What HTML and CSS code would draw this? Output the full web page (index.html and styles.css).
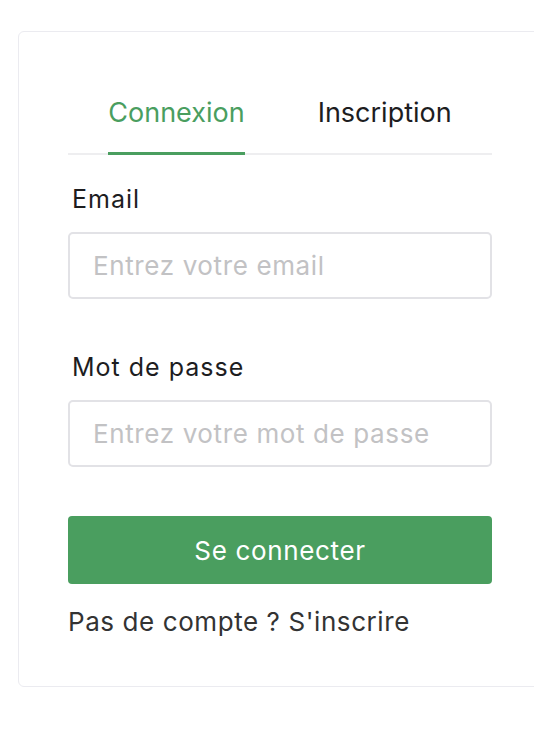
FILE: index.html
```html
<!DOCTYPE html>
<html lang="fr">
<head>
<meta charset="utf-8">
<title>Connexion</title>
<link rel="stylesheet" href="styles.css">
</head>
<body>
<div class="card">
  <div class="tabs">
    <div class="tab active">Connexion</div>
    <div class="tab">Inscription</div>
  </div>
  <form class="form">
    <div class="field">
      <label class="label" for="email">Email</label>
      <input class="input" id="email" type="email" placeholder="Entrez votre email">
    </div>
    <div class="field field-last">
      <label class="label" for="pwd">Mot de passe</label>
      <input class="input" id="pwd" type="password" placeholder="Entrez votre mot de passe">
    </div>
    <button class="btn" type="button">Se connecter</button>
    <p class="switch">Pas de compte ? S'inscrire</p>
  </form>
</div>
</body>
</html>
```

FILE: styles.css
```css
html, body {
  margin: 0;
  padding: 0;
  overflow: hidden;
  background: #ffffff;
}
body {
  font-family: "Inter", "Liberation Sans", sans-serif;
  color: #222;
}
.card {
  margin: 31px 0 0 18px;
  width: 424px;
  padding: 65px 50px 49px 49px;
  border: 1px solid #ebebf0;
  border-radius: 6px;
  background: #fff;
}
.tabs {
  display: flex;
  justify-content: center;
  gap: 73px;
  border-bottom: 2px solid #eeeef0;
}
.tab {
  font-size: 27px;
  line-height: 32px;
  padding-bottom: 23px;
  border-bottom: 3px solid transparent;
  margin-bottom: -2px;
  color: #1d1d1f;
}
.tab.active {
  color: #4a9e5f;
  border-bottom-color: #4a9e5f;
}
.form {
  display: flex;
  flex-direction: column;
  margin: 29px 0 0;
}
.field {
  display: flex;
  flex-direction: column;
  gap: 18px;
  margin-bottom: 53px;
}
.field-last {
  margin-bottom: 49px;
}
.label {
  font-size: 25px;
  line-height: 30px;
  letter-spacing: 1px;
  padding-left: 4px;
  color: #1d1d1f;
}
.input {
  box-sizing: border-box;
  height: 67px;
  width: 100%;
  border: 2px solid #e2e2e6;
  border-radius: 5px;
  padding: 0 23px;
  font-family: inherit;
  font-size: 26px;
  letter-spacing: 0.62px;
  color: #222;
  background: #fff;
  outline: none;
}
.input::placeholder {
  color: #c2c2c4;
}
.btn {
  height: 68px;
  width: 100%;
  border: none;
  border-radius: 4px;
  background: #4a9e5f;
  color: #fff;
  font-family: inherit;
  font-size: 26px;
  letter-spacing: 0.65px;
}
.switch {
  margin: 23px 0 0;
  font-size: 26px;
  line-height: 30px;
  letter-spacing: 0.58px;
  color: #333;
}
```
